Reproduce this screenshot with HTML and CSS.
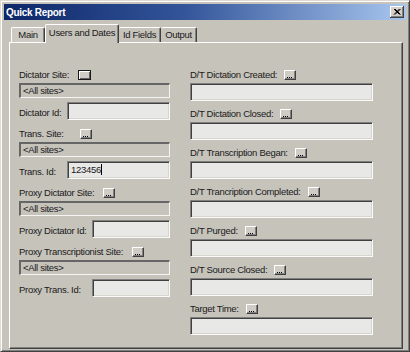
FILE: index.html
```html
<!DOCTYPE html>
<html>
<head>
<meta charset="utf-8">
<title>Quick Report</title>
<link rel="stylesheet" href="styles.css">
</head>
<body>
<div class="window">
  <div class="titlebar">
    <span class="title">Quick Report</span>
    <svg class="close" width="14" height="12" viewBox="0 0 14 12">
      <rect width="14" height="12" fill="#d4d0c8"/>
      <rect x="0" y="0" width="13" height="1" fill="#fff"/>
      <rect x="0" y="0" width="1" height="11" fill="#fff"/>
      <rect x="0" y="11" width="14" height="1" fill="#404040"/>
      <rect x="13" y="0" width="1" height="12" fill="#404040"/>
      <rect x="1" y="10" width="12" height="1" fill="#808080"/>
      <rect x="12" y="1" width="1" height="10" fill="#808080"/>
      <path d="M4 3L9.5 8.5M5 3L10.5 8.5M9.5 3L4 8.5M10.5 3L5 8.5" stroke="#000" stroke-width="1"/>
    </svg>
  </div>
  <div class="tabs">
    <div class="tab tab-main">Main</div>
    <div class="tab tab-active">Users and Dates</div>
    <div class="tab tab-id">Id Fields</div>
    <div class="tab tab-out">Output</div>
  </div>
  <div class="panel">
    <div class="col col-left">
      <div class="section">
        <div class="lrow"><span class="lbl">Dictator Site:</span><span class="dotbtn dotbtn-focus"></span></div>
        <div class="site">&lt;All sites&gt;</div>
        <div class="idrow"><span class="lbl lbl-short">Dictator Id:</span><div class="input"></div></div>
      </div>
      <div class="section">
        <div class="lrow"><span class="lbl lbl-trans">Trans. Site:</span><span class="dotbtn"></span></div>
        <div class="site">&lt;All sites&gt;</div>
        <div class="idrow"><span class="lbl lbl-short">Trans. Id:</span><div class="input input-text"><span class="caret">123456</span></div></div>
      </div>
      <div class="section">
        <div class="lrow"><span class="lbl">Proxy Dictator Site:</span><span class="dotbtn"></span></div>
        <div class="site">&lt;All sites&gt;</div>
        <div class="idrow"><span class="lbl lbl-long">Proxy Dictator Id:</span><div class="input"></div></div>
      </div>
      <div class="section">
        <div class="lrow"><span class="lbl">Proxy Transcriptionist Site:</span><span class="dotbtn"></span></div>
        <div class="site">&lt;All sites&gt;</div>
        <div class="idrow"><span class="lbl lbl-long">Proxy Trans. Id:</span><div class="input"></div></div>
      </div>
    </div>
    <div class="col col-right">
      <div class="rsection">
        <div class="lrow"><span class="lbl">D/T Dictation Created:</span><span class="dotbtn"></span></div>
        <div class="input"></div>
      </div>
      <div class="rsection">
        <div class="lrow"><span class="lbl">D/T Dictation Closed:</span><span class="dotbtn"></span></div>
        <div class="input"></div>
      </div>
      <div class="rsection">
        <div class="lrow"><span class="lbl">D/T Transcription Began:</span><span class="dotbtn"></span></div>
        <div class="input"></div>
      </div>
      <div class="rsection">
        <div class="lrow"><span class="lbl">D/T Trancription Completed:</span><span class="dotbtn"></span></div>
        <div class="input"></div>
      </div>
      <div class="rsection">
        <div class="lrow"><span class="lbl">D/T Purged:</span><span class="dotbtn"></span></div>
        <div class="input"></div>
      </div>
      <div class="rsection">
        <div class="lrow"><span class="lbl">D/T Source Closed:</span><span class="dotbtn"></span></div>
        <div class="input"></div>
      </div>
      <div class="rsection">
        <div class="lrow"><span class="lbl">Target Time:</span><span class="dotbtn"></span></div>
        <div class="input"></div>
      </div>
    </div>
  </div>
</div>
</body>
</html>
```

FILE: styles.css
```css
html, body {
  margin: 0;
  padding: 0;
}
body {
  background: #c6c3bb;
  font-family: "Liberation Sans", Arial, sans-serif;
  font-size: 9.5px;
  letter-spacing: -0.3px;
  color: #1a1a1a;
}
.window {
  width: 410px;
  height: 352px;
  box-sizing: border-box;
  border: 1px solid;
  border-color: #dedad2 #404040 #404040 #dedad2;
  box-shadow: inset 1px 1px #fff, inset -1px -1px #808080;
  padding: 3px 3px 1px 3px;
  background: #c6c3bb;
  display: flex;
  flex-direction: column;
}
.titlebar {
  height: 16px;
  flex: none;
  background: linear-gradient(to right, #0c2668 0%, #34559a 45%, #a8c6ee 100%);
  display: flex;
  align-items: center;
  justify-content: space-between;
  padding: 0 2px 0 2px;
}
.title {
  color: #fff;
  font-weight: bold;
  font-size: 10px;
  letter-spacing: -0.3px;
}
.close {
  display: block;
}
.tabs {
  display: flex;
  align-items: flex-end;
  height: 18px;
  margin-top: 4px;
  padding-left: 7px;
  position: relative;
  z-index: 1;
  flex: none;
}
.tab {
  height: 15px;
  box-sizing: border-box;
  border-top: 1px solid #fff;
  border-left: 1px solid #fff;
  border-right: 1px solid #404040;
  box-shadow: inset -1px 0 #808080;
  border-radius: 2px 2px 0 0;
  text-align: center;
  line-height: 14px;
  white-space: nowrap;
  background: #c6c3bb;
}
.tab-main { width: 34px; background: #cdcac3; }
.tab-active {
  width: 74px;
  height: 19px;
  margin-bottom: -1px;
  line-height: 15px;
}
.tab-id { width: 42px; border-left: none; }
.tab-out { width: 36px; border-left: none; }
.panel {
  flex: 1;
  margin: 0 3px 1px 5px;
  border-top: 1px solid #fff;
  border-left: 1px solid #fff;
  border-right: 1px solid #404040;
  border-bottom: 1px solid #404040;
  box-shadow: inset -1px -1px #808080;
  padding: 24px 0 0 9px;
  display: grid;
  grid-template-columns: 151px 183px;
  column-gap: 20px;
  align-content: start;
}
.col-left {
  display: flex;
  flex-direction: column;
  gap: 6px;
}
.section {
  display: flex;
  flex-direction: column;
}
.col-right {
  display: flex;
  flex-direction: column;
  gap: 5px;
}
.rsection {
  display: flex;
  flex-direction: column;
}
.rsection .input {
  flex: none;
}
.lrow {
  height: 16px;
  display: flex;
  align-items: center;
  gap: 9px;
}
.rsection .lrow {
  gap: 7px;
}
.lbl {
  white-space: nowrap;
  line-height: 12px;
}
.lbl-trans { min-width: 52px; }
.site {
  height: 15px;
  box-sizing: border-box;
  border-top: 2px solid #666;
  border-left: 2px solid #666;
  border-right: 1px solid #f4f4f2;
  border-bottom: 1px solid #f4f4f2;
  padding-left: 2px;
  line-height: 12px;
}
.idrow {
  margin-top: 4px;
  height: 18px;
  display: flex;
  align-items: flex-end;
}
.idrow .lbl {
  flex: none;
  padding-bottom: 1px;
}
.lbl-short { width: 48px; }
.lbl-long { width: 73px; }
.input {
  flex: 1;
  height: 18px;
  box-sizing: border-box;
  border: 1px solid;
  border-color: #808080 #fafafa #fafafa #808080;
  box-shadow: inset 1px 1px #404040, inset -1px -1px #d8d5ce;
  background: #e8e8e6;
}
.input-text {
  padding-left: 3px;
  line-height: 15px;
}
.caret {
  border-right: 1px solid #000;
}
.dotbtn {
  position: relative;
  flex: none;
  width: 12px;
  height: 10px;
  box-sizing: border-box;
  border-top: 1px solid #fff;
  border-left: 1px solid #fff;
  border-right: 1px solid #404040;
  border-bottom: 1px solid #404040;
  box-shadow: inset -1px -1px #808080;
  background: #cfccc5;
}
.dotbtn::after {
  content: "";
  position: absolute;
  left: 2px;
  bottom: 1px;
  width: 1px;
  height: 1px;
  background: #000;
  box-shadow: 2px 0 #000, 4px 0 #000;
}
.dotbtn-focus {
  width: 13px;
  border: 1px solid #1a1a1a;
  box-shadow: inset 1px 1px #fff, inset -1px -1px #606060;
}
.dotbtn-focus::after {
  display: none;
}
```
